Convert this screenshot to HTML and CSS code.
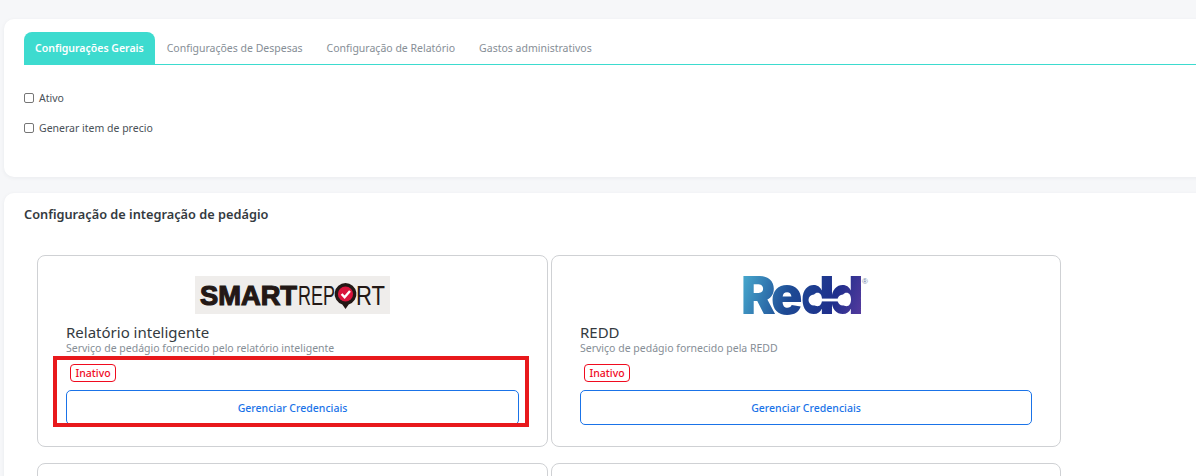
FILE: index.html
```html
<!DOCTYPE html>
<html lang="pt-BR">
<head>
  <meta charset="UTF-8" />
  <title>Configurações</title>
  <link rel="stylesheet" href="styles.css">
</head>
<body>
  <div class="page">
    <section class="panel panel-geral">
      <nav class="tabs">
        <a class="tab active">Configurações Gerais</a>
        <a class="tab">Configurações de Despesas</a>
        <a class="tab">Configuração de Relatório</a>
        <a class="tab">Gastos administrativos</a>
      </nav>
      <label class="check"><input type="checkbox" /> Ativo</label>
      <label class="check"><input type="checkbox" /> Generar item de precio</label>
    </section>

    <section class="panel panel-pedagio">
      <h2>Configuração de integração de pedágio</h2>
      <div class="grid">
        <div class="card">
          <div class="logo-row">
            <svg class="smart-logo" viewBox="0 0 195 38">
              <rect width="195" height="38" fill="#efedeb"/>
              <text class="smart-bold" x="5" y="29" textLength="97" lengthAdjust="spacingAndGlyphs">SMART</text>
              <text class="smart-thin" x="103" y="29" textLength="37" lengthAdjust="spacingAndGlyphs">REP</text>
              <path d="M150.5 7a11 11 0 0 0-3.2 21.5l3.2 4.5 3.2-4.5A11 11 0 0 0 150.5 7z" fill="#231815"/>
              <circle cx="150.5" cy="18" r="7.6" fill="#d9143c"/>
              <path d="M146.6 18l3 3.2 5.4-6.2" fill="none" stroke="#fff" stroke-width="2.4"/>
              <text class="smart-thin" x="161" y="29" textLength="29" lengthAdjust="spacingAndGlyphs">RT</text>
            </svg>
          </div>
          <h3>Relatório inteligente</h3>
          <p class="desc">Serviço de pedágio fornecido pelo relatório inteligente</p>
          <span class="badge">Inativo</span>
          <button class="btn">Gerenciar Credenciais</button>
          <div class="highlight"></div>
        </div>

        <div class="card">
          <div class="logo-row">
            <svg class="redd-logo" viewBox="0 0 126 38">
              <defs>
                <linearGradient id="reddGrad" gradientUnits="userSpaceOnUse" x1="0" y1="0" x2="118" y2="38">
                  <stop offset="0" stop-color="#46a6cc"/>
                  <stop offset="0.4" stop-color="#1d4a94"/>
                  <stop offset="0.75" stop-color="#1f2f8c"/>
                  <stop offset="1" stop-color="#563a9e"/>
                </linearGradient>
              </defs>
              <text class="redd-word" x="-3 27 57 86" y="37.5" fill="url(#reddGrad)">Redd</text>
              <circle cx="70" cy="24" r="5.5" fill="#fff"/>
              <circle cx="99" cy="24" r="5.5" fill="#fff"/>
              <rect x="70" y="22.6" width="29" height="2.8" fill="#fff"/>
              <text class="redd-reg" x="118" y="8" fill="#6f7fa8">®</text>
            </svg>
          </div>
          <h3>REDD</h3>
          <p class="desc">Serviço de pedágio fornecido pela REDD</p>
          <span class="badge">Inativo</span>
          <button class="btn">Gerenciar Credenciais</button>
        </div>

        <div class="card"></div>
        <div class="card"></div>
      </div>
    </section>
  </div>
</body>
</html>
```

FILE: styles.css
```css
* { box-sizing: border-box; margin: 0; padding: 0; }
html, body { height: 100%; overflow: hidden; }
body {
  background: #f6f7f9;
  color: #343a40;
  font-family: 'Noto Sans', sans-serif;
  font-size: 10.5px;
}
.page { width: 1320px; padding: 19px 0 0 4px; }

.panel {
  background: #fff;
  border-radius: 10px;
  box-shadow: 0 1px 4px rgba(40,50,70,0.06);
}
.panel-geral { height: 158px; padding: 13px 20px 0; margin-bottom: 16px; }
.panel-pedagio { padding: 12px 20px 0; }

.tabs {
  display: flex;
  height: 33px;
  border-bottom: 1px solid #3ddbcf;
  margin-bottom: 26px;
}
.tab {
  display: flex;
  align-items: center;
  padding: 0 12px 1px;
  color: #868e96;
  white-space: nowrap;
}
.tab.active {
  padding: 0 11px 1px;
  background: #3ddbcf;
  color: #fff;
  font-weight: 600;
  border-radius: 8px 8px 0 0;
}

.check {
  display: flex;
  align-items: center;
  gap: 5px;
  height: 14px;
  margin-bottom: 16px;
  color: #495057;
}
.check input {
  appearance: none;
  width: 10px;
  height: 10px;
  background: #fff;
  border: 1px solid #767676;
  border-radius: 2px;
}

h2 {
  font-size: 12.75px;
  font-weight: 600;
  line-height: 18px;
  color: #343a40;
  margin-bottom: 32px;
}

.grid {
  display: grid;
  grid-template-columns: 511px 510px;
  grid-auto-rows: 192px;
  gap: 16px 3px;
  margin-left: 13px;
}
.card {
  position: relative;
  display: flex;
  flex-direction: column;
  align-items: flex-start;
  padding: 20px 28px 0;
  background: #fff;
  border: 1px solid #cfd1d4;
  border-radius: 8px;
}
.logo-row {
  display: flex;
  justify-content: center;
  align-self: stretch;
  height: 38px;
  margin-bottom: 9px;
}

/* logos */
.smart-logo { width: 195px; height: 38px; overflow: visible; }
.smart-bold {
  font: 700 28px 'Liberation Sans', sans-serif;
  fill: #231815;
  stroke: #231815;
  stroke-width: 1.2px;
}
.smart-thin {
  font: 400 28px 'Liberation Sans', sans-serif;
  fill: #231815;
}
.redd-logo { width: 126px; height: 38px; margin-left: 2px; overflow: visible; }
.redd-word {
  font-family: Inter, sans-serif;
  font-weight: 900;
  font-size: 52px;
}
.redd-reg { font-family: 'Liberation Sans', sans-serif; font-size: 8px; }

h3 {
  font-size: 15px;
  font-weight: 400;
  line-height: 19px;
  color: #343a40;
}
.desc {
  color: #868e96;
  line-height: 13px;
  margin-bottom: 9px;
}
.badge {
  margin-left: 4px;
  padding: 0 4.5px;
  height: 18px;
  line-height: 16px;
  color: #f00b1f;
  font-weight: 500;
  border: 1px solid #f00b1f;
  border-radius: 4px;
}
.btn {
  align-self: stretch;
  height: 35px;
  margin-top: 8px;
  background: #fff;
  color: #1a73e8;
  border: 1px solid #1a73e8;
  border-radius: 5px;
  font: 500 10.5px 'Noto Sans', sans-serif;
}

/* red box marked over the first card */
.highlight {
  position: absolute;
  left: 15px;
  top: 100px;
  width: 476px;
  height: 71px;
  border: 4px solid #e8191c;
  pointer-events: none;
}
```
